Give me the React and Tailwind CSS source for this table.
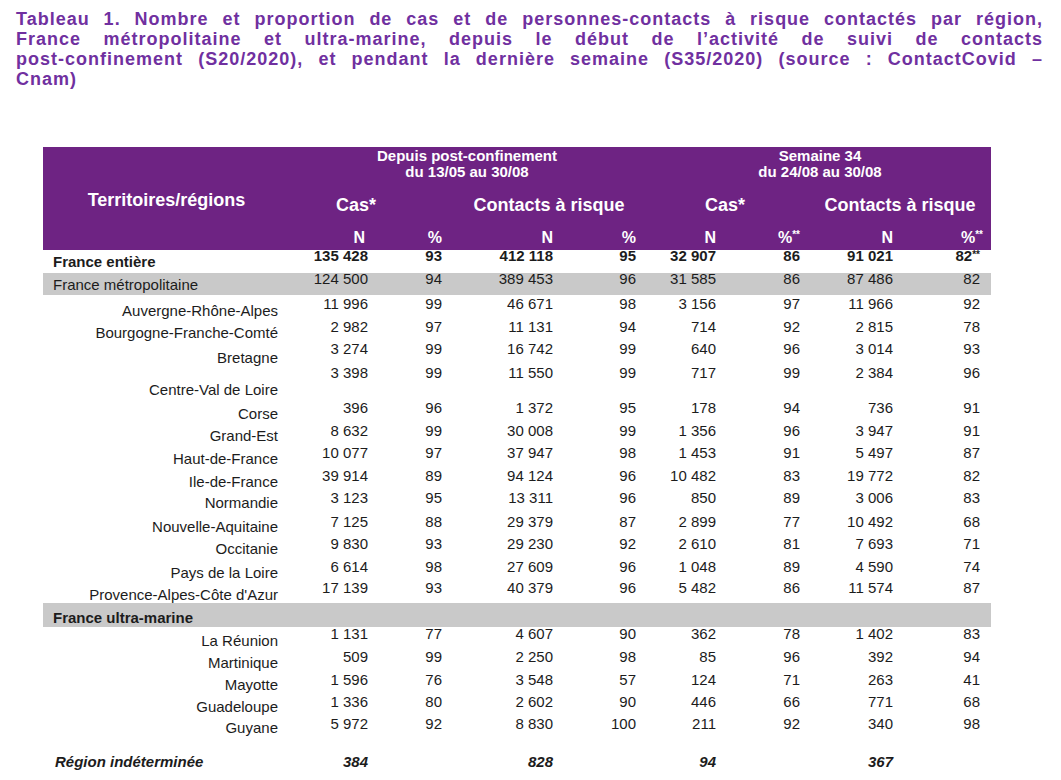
import React from 'react';

const cols = 'grid grid-cols-[247px_78px_74px_111px_83px_80px_84px_93px_87px]';

const titleLines = [
  'Tableau 1. Nombre et proportion de cas et de personnes-contacts à risque contactés par région,',
  'France métropolitaine et ultra-marine, depuis le début de l’activité de suivi de contacts',
  'post-confinement (S20/2020), et pendant la dernière semaine (S35/2020) (source : ContactCovid –',
];

// h = row height, np = top offset of numbers, lp = top offset of label
const rows = [
  { label: 'France entière', kind: 'total', h: 'h-[23px]', np: 'pt-0', lp: 'pt-[6px]', v: ['135 428', '93', '412 118', '95', '32 907', '86', '91 021', '82'] },
  { label: 'France métropolitaine', kind: 'band', h: 'h-[22px]', np: 'pt-0', lp: 'pt-[6px]', v: ['124 500', '94', '389 453', '96', '31 585', '86', '87 486', '82'] },
  { label: 'Auvergne-Rhône-Alpes', h: 'h-[23px]', np: 'pt-[3px]', lp: 'pt-[10px]', v: ['11 996', '99', '46 671', '98', '3 156', '97', '11 966', '92'] },
  { label: 'Bourgogne-Franche-Comté', h: 'h-[23px]', np: 'pt-[3px]', lp: 'pt-[9px]', v: ['2 982', '97', '11 131', '94', '714', '92', '2 815', '78'] },
  { label: 'Bretagne', h: 'h-[24px]', np: 'pt-[2px]', lp: 'pt-[11px]', v: ['3 274', '99', '16 742', '99', '640', '96', '3 014', '93'] },
  { label: 'Centre-Val de Loire', h: 'h-[34px]', np: 'pt-[2px]', lp: 'pt-[19px]', v: ['3 398', '99', '11 550', '99', '717', '99', '2 384', '96'] },
  { label: 'Corse', h: 'h-[24px]', np: 'pt-[3px]', lp: 'pt-[9px]', v: ['396', '96', '1 372', '95', '178', '94', '736', '91'] },
  { label: 'Grand-Est', h: 'h-[22px]', np: 'pt-[2px]', lp: 'pt-[7px]', v: ['8 632', '99', '30 008', '99', '1 356', '96', '3 947', '91'] },
  { label: 'Haut-de-France', h: 'h-[22px]', np: 'pt-[2px]', lp: 'pt-[8px]', v: ['10 077', '97', '37 947', '98', '1 453', '91', '5 497', '87'] },
  { label: 'Ile-de-France', h: 'h-[23px]', np: 'pt-[3px]', lp: 'pt-[9px]', v: ['39 914', '89', '94 124', '96', '10 482', '83', '19 772', '82'] },
  { label: 'Normandie', h: 'h-[22px]', np: 'pt-[2px]', lp: 'pt-[7px]', v: ['3 123', '95', '13 311', '96', '850', '89', '3 006', '83'] },
  { label: 'Nouvelle-Aquitaine', h: 'h-[23px]', np: 'pt-[4px]', lp: 'pt-[9px]', v: ['7 125', '88', '29 379', '87', '2 899', '77', '10 492', '68'] },
  { label: 'Occitanie', h: 'h-[23px]', np: 'pt-[3px]', lp: 'pt-[8px]', v: ['9 830', '93', '29 230', '92', '2 610', '81', '7 693', '71'] },
  { label: 'Pays de la Loire', h: 'h-[22px]', np: 'pt-[3px]', lp: 'pt-[9px]', v: ['6 614', '98', '27 609', '96', '1 048', '89', '4 590', '74'] },
  { label: "Provence-Alpes-Côte d'Azur", h: 'h-[23px]', np: 'pt-[2px]', lp: 'pt-[9px]', v: ['17 139', '93', '40 379', '96', '5 482', '86', '11 574', '87'] },
  { label: 'France ultra-marine', kind: 'bandBold', h: 'h-[24px]', np: 'pt-0', lp: 'pt-[9px]', v: [] },
  { label: 'La Réunion', h: 'h-[22px]', np: 'pt-[1px]', lp: 'pt-[8px]', v: ['1 131', '77', '4 607', '90', '362', '78', '1 402', '83'] },
  { label: 'Martinique', h: 'h-[23px]', np: 'pt-[2px]', lp: 'pt-[8px]', v: ['509', '99', '2 250', '98', '85', '96', '392', '94'] },
  { label: 'Mayotte', h: 'h-[22px]', np: 'pt-[2px]', lp: 'pt-[7px]', v: ['1 596', '76', '3 548', '57', '124', '71', '263', '41'] },
  { label: 'Guadeloupe', h: 'h-[23px]', np: 'pt-[2px]', lp: 'pt-[7px]', v: ['1 336', '80', '2 602', '90', '446', '66', '771', '68'] },
  { label: 'Guyane', h: 'h-[35px]', np: 'pt-[1px]', lp: 'pt-[5px]', v: ['5 972', '92', '8 830', '100', '211', '92', '340', '98'] },
  { label: 'Région indéterminée', kind: 'undet', h: 'h-[20px]', np: 'pt-[4px]', lp: 'pt-[4px]', v: ['384', '', '828', '', '94', '', '367', ''] },
];

const Stars = () => <span className="text-[10px] align-top leading-none">**</span>;

const DataRow = ({ row }) => {
  const band = row.kind === 'band' || row.kind === 'bandBold';
  const bold = row.kind === 'total' || row.kind === 'bandBold';
  const italic = row.kind === 'undet';
  const left = row.kind === 'total' || band || italic;

  return (
    <div className={`${cols} ${row.h} ${band ? 'bg-[#c9c9c9]' : ''} pr-[11px] w-[948px]`}>
      <div
        className={`${row.lp} leading-[12px] whitespace-nowrap ${left ? (italic ? 'pl-[12px] text-left' : 'pl-[10px] text-left') : 'pr-[12px] text-right'} ${bold || italic ? 'font-bold' : ''} ${italic ? 'italic' : ''}`}
      >
        {row.label}
      </div>
      {row.v.map((val, i) => (
        <div
          key={i}
          className={`${row.np} leading-[12px] text-right whitespace-nowrap ${row.kind === 'total' || italic ? 'font-bold' : ''} ${italic ? 'italic' : ''}`}
        >
          {val}
          {row.kind === 'total' && i === 7 && <Stars />}
        </div>
      ))}
    </div>
  );
};

export default function App() {
  return (
    <div className="w-[1061px] h-[780px] bg-white overflow-hidden font-['Liberation_Sans',Arial,sans-serif] text-[#1c1c1c]">
      {/* Title */}
      <div className="pt-[9px] pl-[16px] pr-[18px] text-[18px] leading-[20px] font-bold text-[#7030a0] tracking-[1px]">
        {titleLines.map((line) => (
          <div key={line} className="text-justify [text-align-last:justify] whitespace-nowrap">
            {line}
          </div>
        ))}
        <div>Cnam)</div>
      </div>

      {/* Table */}
      <div className="mt-[58px] ml-[43px] w-[948px] text-[15px]">
        {/* Purple header */}
        <div className="bg-[#6e2383] text-white font-bold h-[103px] pr-[11px]">
          <div className={`${cols} grid-rows-[39px_36px_28px] h-[103px]`}>
            <div className="row-span-3 flex items-center justify-center text-[18px] pt-[3px]">
              Territoires/régions
            </div>
            <div className="col-span-4 text-center text-[15px] leading-[16px] pt-[1px] pl-[8px]">
              <div>Depuis post-confinement</div>
              <div>du 13/05 au 30/08</div>
            </div>
            <div className="col-span-4 text-center text-[15px] leading-[16px] pt-[1px] pl-[24px]">
              <div>Semaine 34</div>
              <div>du 24/08 au 30/08</div>
            </div>

            <div className="col-span-2 text-center text-[18px] leading-[20px] pt-[9px] pr-[20px]">Cas*</div>
            <div className="col-span-2 text-center text-[18px] leading-[20px] pt-[9px] pl-[20px]">Contacts à risque</div>
            <div className="col-span-2 text-center text-[18px] leading-[20px] pt-[9px] pl-[14px]">Cas*</div>
            <div className="col-span-2 text-center text-[18px] leading-[20px] pt-[9px] pl-[20px]">Contacts à risque</div>

            <div className="text-right text-[16px] leading-[16px] pt-[8px] pr-[3px]">N</div>
            <div className="text-right text-[16px] leading-[16px] pt-[8px]">%</div>
            <div className="text-right text-[16px] leading-[16px] pt-[8px]">N</div>
            <div className="text-right text-[16px] leading-[16px] pt-[8px]">%</div>
            <div className="text-right text-[16px] leading-[16px] pt-[8px]">N</div>
            <div className="text-right text-[16px] leading-[16px] pt-[8px]">%<Stars /></div>
            <div className="text-right text-[16px] leading-[16px] pt-[8px]">N</div>
            <div className="text-right text-[16px] leading-[16px] pt-[8px] -mr-[3px]">%<Stars /></div>
          </div>
        </div>

        {rows.map((row) => (
          <DataRow key={row.label} row={row} />
        ))}
      </div>
    </div>
  );
}
